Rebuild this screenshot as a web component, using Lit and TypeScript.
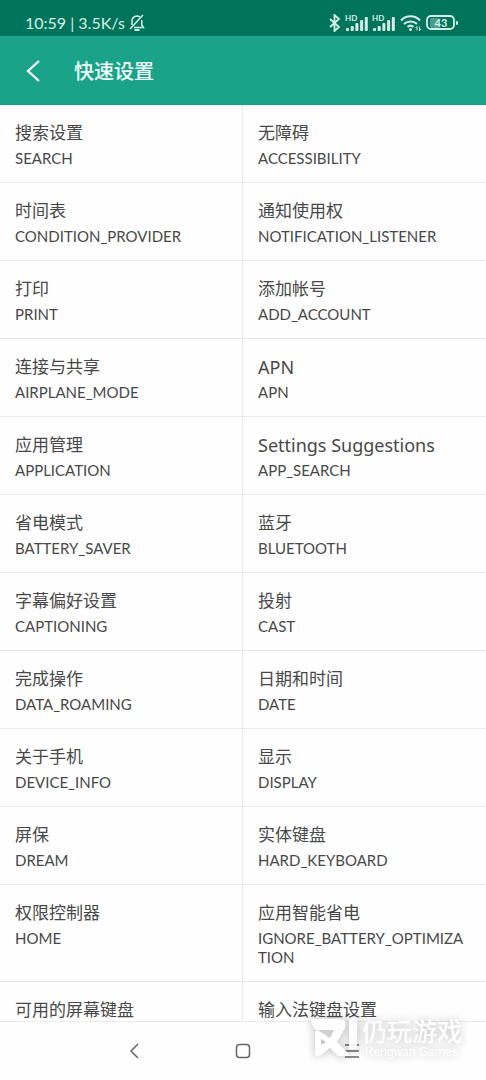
import { LitElement, html, svg, css } from "lit";
import { customElement } from "lit/decorators.js";
import { classMap } from "lit/directives/class-map.js";

interface Shortcut {
  title: string;
  key: string;
}

const SHORTCUTS: Shortcut[] = [
  { title: "搜索设置", key: "SEARCH" },
  { title: "无障碍", key: "ACCESSIBILITY" },
  { title: "时间表", key: "CONDITION_PROVIDER" },
  { title: "通知使用权", key: "NOTIFICATION_LISTENER" },
  { title: "打印", key: "PRINT" },
  { title: "添加帐号", key: "ADD_ACCOUNT" },
  { title: "连接与共享", key: "AIRPLANE_MODE" },
  { title: "APN", key: "APN" },
  { title: "应用管理", key: "APPLICATION" },
  { title: "Settings Suggestions", key: "APP_SEARCH" },
  { title: "省电模式", key: "BATTERY_SAVER" },
  { title: "蓝牙", key: "BLUETOOTH" },
  { title: "字幕偏好设置", key: "CAPTIONING" },
  { title: "投射", key: "CAST" },
  { title: "完成操作", key: "DATA_ROAMING" },
  { title: "日期和时间", key: "DATE" },
  { title: "关于手机", key: "DEVICE_INFO" },
  { title: "显示", key: "DISPLAY" },
  { title: "屏保", key: "DREAM" },
  { title: "实体键盘", key: "HARD_KEYBOARD" },
  { title: "权限控制器", key: "HOME" },
  { title: "应用智能省电", key: "IGNORE_BATTERY_OPTIMIZATION" },
  { title: "可用的屏幕键盘", key: "" },
  { title: "输入法键盘设置", key: "" },
];

/** True for titles written in Latin letters only. */
const isLatin = (text: string) => /^[\x20-\x7e]+$/.test(text);

@customElement("status-bar")
export class StatusBar extends LitElement {
  static styles = css`
    :host {
      display: flex;
      flex: none;
      align-items: center;
      justify-content: space-between;
      height: 36px;
      padding: 10px 28px 0 25px;
      box-sizing: border-box;
      background: #00745b;
      color: #d5eee7;
      font-size: 16px;
      line-height: 20px;
    }
    .side {
      display: flex;
      align-items: center;
      gap: 4px;
    }
    svg {
      display: block;
    }
    .battery-text {
      font-size: 11px;
      font-weight: 700;
    }
    .hd {
      font-size: 8px;
      font-weight: 700;
    }
  `;

  private signal() {
    return html`<svg width="23" height="18" viewBox="0 0 23 18" fill="currentColor">
      <text class="hd" x="0" y="7">HD</text>
      ${[3, 5, 8, 11, 14].map(
        (h, i) => svg`<rect x=${1 + i * 4.7} y=${17 - h} width="3" height=${h} rx="1" />`
      )}
    </svg>`;
  }

  render() {
    return html`
      <div class="side">
        <span>10:59 | 3.5K/s</span>
        <svg width="16" height="18" viewBox="0 0 16 18" fill="none" stroke="currentColor" stroke-width="1.5">
          <path d="M3 11V7a5 5 0 0 1 8-4M12.800 6v5l1.700 2.500H5M14 1 1 15" />
          <path d="M5.500 16h5" stroke-width="2" />
        </svg>
      </div>
      <div class="side">
        <svg width="12" height="18" viewBox="0 0 12 18" fill="none" stroke="currentColor" stroke-width="1.800">
          <path d="M1 5l9 8-4.500 4V1L10 5l-9 8" />
        </svg>
        ${this.signal()} ${this.signal()}
        <svg width="23" height="18" viewBox="0 0 23 18" fill="none" stroke="currentColor" stroke-width="2">
          <path d="M2 6.500a13 13 0 0 1 19 0M5 10a9.500 9.500 0 0 1 13 0M8.500 13a4.500 4.500 0 0 1 6 0" />
          <circle cx="11.500" cy="15.500" r="1.500" fill="currentColor" stroke="none" />
          <path d="M18 12.500v4M16.500 14l1.500-1.500M20.500 12.500v4M20.500 16.500l1.500-1.500" stroke-width="1" />
        </svg>
        <svg width="32" height="18" viewBox="0 0 32 18" fill="currentColor">
          <rect x="4" y="4" width="10" height="10" rx="2" opacity="0.35" />
          <rect x="1" y="2" width="27" height="13" rx="4" fill="none" stroke="currentColor" stroke-width="1.800" />
          <rect x="30" y="7" width="2" height="4" rx="1" />
          <text class="battery-text" x="15" y="13" text-anchor="middle">43</text>
        </svg>
      </div>
    `;
  }
}

@customElement("site-watermark")
export class SiteWatermark extends LitElement {
  static styles = css`
    :host {
      display: flex;
      gap: 4px;
      color: #fff;
      opacity: 0.9;
      filter: drop-shadow(0 0 5px rgba(0, 0, 0, 0.3));
      pointer-events: none;
    }
    svg {
      display: block;
      overflow: visible;
    }
    .words {
      display: flex;
      flex-direction: column;
    }
    .name {
      font-size: 25px;
      line-height: 26px;
      font-weight: 500;
    }
    .latin {
      padding-left: 3px;
      font-family: "Liberation Sans", sans-serif;
      font-size: 12px;
      line-height: 16px;
    }
  `;

  render() {
    return html`
      <svg width="47" height="40" viewBox="0 0 47 40" fill="currentColor">
        <path
          fill-rule="evenodd"
          d="M0 1H29Q37 2 34 10L26 24 40 38H27L19 30 10 37Q4 40 4 34V15Q4 11 8 13L19 20 23 12H6Q1 11 0 1ZM10 21v6l5-3Z"
        />
        <path d="M38 2q4-3 8-2v28q-1 4-8 3Z" />
      </svg>
      <div class="words">
        <span class="name">仍玩游戏</span>
        <span class="latin">Rengwan Games</span>
      </div>
    `;
  }
}

@customElement("app-root")
export class AppRoot extends LitElement {
  static styles = css`
    :host {
      display: flex;
      flex-direction: column;
      position: relative;
      height: 100vh;
      overflow: hidden;
      background: #fefefe;
      color: #484848;
      font-family: Lato, "Noto Sans CJK SC", sans-serif;
    }
    button {
      margin: 0;
      padding: 0;
      border: 0;
      background: none;
      color: inherit;
      font: inherit;
      text-align: left;
    }
    svg {
      display: block;
    }
    .bar {
      display: flex;
      flex: none;
      align-items: center;
      gap: 24px;
      height: 69px;
      padding: 0 16px;
      background: #1aa388;
      color: #f4fffc;
    }
    h1 {
      margin: 0;
      font-size: 20px;
      line-height: 28px;
      font-weight: 500;
    }
    .list {
      display: grid;
      grid-template-columns: 1fr 1fr;
      flex: 1;
      min-height: 0;
      margin: 0;
      padding: 0;
      list-style: none;
      overflow-y: auto;
      scrollbar-width: none;
    }
    .item {
      border-bottom: 1px solid #ebebeb;
    }
    .item:nth-child(odd) {
      border-right: 1px solid #ebebeb;
    }
    .shortcut {
      display: flex;
      flex-direction: column;
      gap: 4px;
      width: 100%;
      padding: 16px 20px 14px 15px;
    }
    .title {
      font-size: 17px;
      line-height: 24px;
    }
    .title.latin {
      font-family: "Noto Sans", sans-serif;
      font-size: 18px;
    }
    .key {
      min-height: 19px;
      font-size: 15px;
      line-height: 19px;
      word-break: break-all;
    }
    .nav {
      display: flex;
      flex: none;
      justify-content: center;
      align-items: center;
      gap: 61px;
      height: 58px;
      border-top: 1px solid #ececec;
      color: #666;
    }
    .nav button {
      display: grid;
      place-items: center;
      width: 48px;
      height: 48px;
    }
    .watermark {
      position: absolute;
      right: 24px;
      bottom: 20px;
    }
  `;

  render() {
    return html`
      <status-bar></status-bar>
      <header class="bar">
        <button aria-label="返回">
          <svg width="34" height="28" viewBox="0 0 34 28" fill="none" stroke="currentColor" stroke-width="2.300">
            <path d="M23 4 12 14l11 10" />
          </svg>
        </button>
        <h1>快速设置</h1>
      </header>
      <ul class="list">
        ${SHORTCUTS.map(
          (s) => html`<li class="item">
            <button class="shortcut">
              <span class=${classMap({ title: true, latin: isLatin(s.title) })}>${s.title}</span>
              <span class="key">${s.key}</span>
            </button>
          </li>`
        )}
      </ul>
      <nav class="nav">
        <button aria-label="返回">
          <svg width="16" height="16" viewBox="0 0 16 16" fill="none" stroke="currentColor" stroke-width="1.500"><path d="M12 1 5 8l7 7" /></svg>
        </button>
        <button aria-label="主屏幕">
          <svg width="16" height="16" viewBox="0 0 16 16" fill="none" stroke="currentColor" stroke-width="1.500"><rect x="1.500" y="1.500" width="13" height="13" rx="3" /></svg>
        </button>
        <button aria-label="最近任务">
          <svg width="16" height="16" viewBox="0 0 16 16" fill="none" stroke="currentColor" stroke-width="1.500"><path d="M1 2h14M1 8h14M1 14h14" /></svg>
        </button>
      </nav>
      <site-watermark class="watermark"></site-watermark>
    `;
  }
}
